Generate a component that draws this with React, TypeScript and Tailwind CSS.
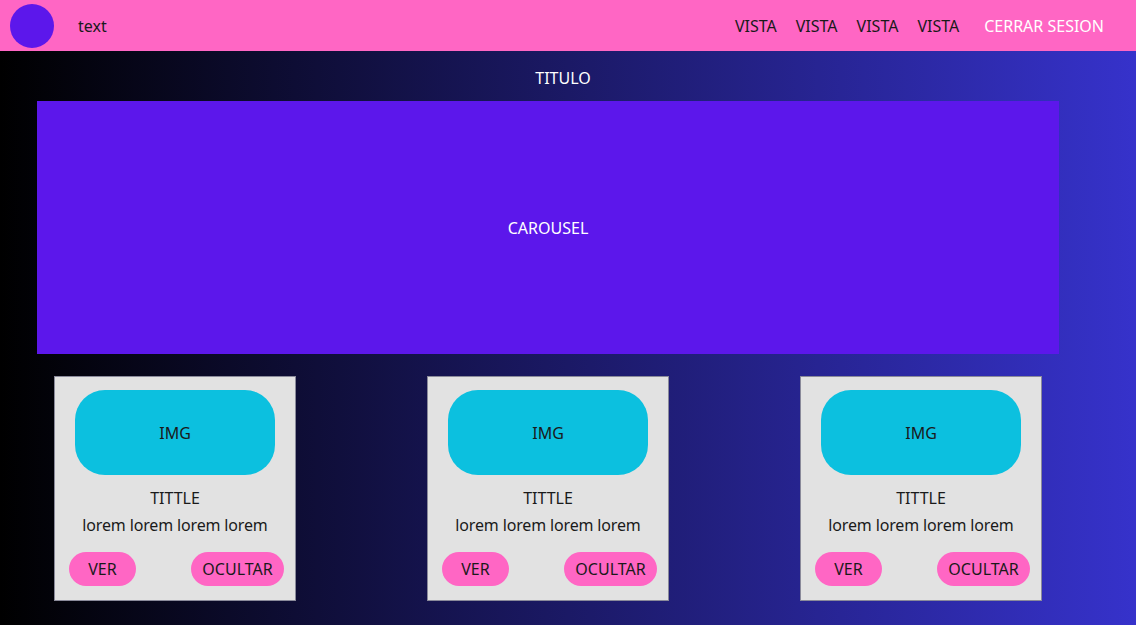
import React from "react";

const font = { fontFamily: '"Noto Sans", "Open Sans", sans-serif' };

function Card() {
  return (
    <div className="w-[242px] h-[225px] bg-[#e2e2e2] border border-[#8a8a9a] flex flex-col items-center pt-[13px]">
      <div className="w-[200px] h-[85px] rounded-[30px] bg-[#0cc0df] flex items-center justify-center text-[16px] text-[#1a1a1a]">
        IMG
      </div>
      <div className="mt-[11px] text-[16px] leading-[24px] text-[#1a1a1a]">TITTLE</div>
      <div className="mt-[3px] text-[16px] leading-[24px] tracking-[-0.15px] text-[#1a1a1a]">lorem lorem lorem lorem</div>
      <div className="mt-[15px] w-full flex justify-between pl-[14px] pr-[11px]">
        <button className="w-[67px] h-[34px] rounded-full bg-[#ff66c4] text-[16px] text-[#1a1a1a]">VER</button>
        <button className="w-[93px] h-[34px] rounded-full bg-[#ff66c4] text-[16px] text-[#1a1a1a]">OCULTAR</button>
      </div>
    </div>
  );
}

export default function App() {
  return (
    <div style={font} className="w-[1136px] h-[625px] flex flex-col overflow-hidden">
      <header className="h-[51px] bg-[#ff66c4] flex items-center pl-[10px] pr-[32px] shrink-0">
        <div className="w-[44px] h-[44px] rounded-full bg-[#5c17eb]" />
        <span className="ml-[24px] text-[16px] text-[#1a1a1a]">text</span>
        <nav className="ml-auto flex items-center text-[16px] text-[#1a1a1a]">
          <span>VISTA</span>
          <span className="ml-[19px]">VISTA</span>
          <span className="ml-[19px]">VISTA</span>
          <span className="ml-[19px]">VISTA</span>
          <span className="ml-[25px] text-white">CERRAR SESION</span>
        </nav>
      </header>
      <main className="flex-1 bg-[linear-gradient(to_right,#000000,#3632cb)] flex flex-col">
        <div className="w-[1096px] flex flex-col">
          <h1 className="mt-[15px] h-[24px] leading-[24px] text-[16px] text-white text-center pl-[30px]">TITULO</h1>
          <div className="mt-[11px] ml-[37px] w-[1022px] h-[253px] bg-[#5c17eb] flex items-center justify-center text-white text-[16px]">
            CAROUSEL
          </div>
          <div className="mt-[22px] flex pl-[54px] gap-[131px]">
            <Card />
            <Card />
            <Card />
          </div>
        </div>
      </main>
    </div>
  );
}
